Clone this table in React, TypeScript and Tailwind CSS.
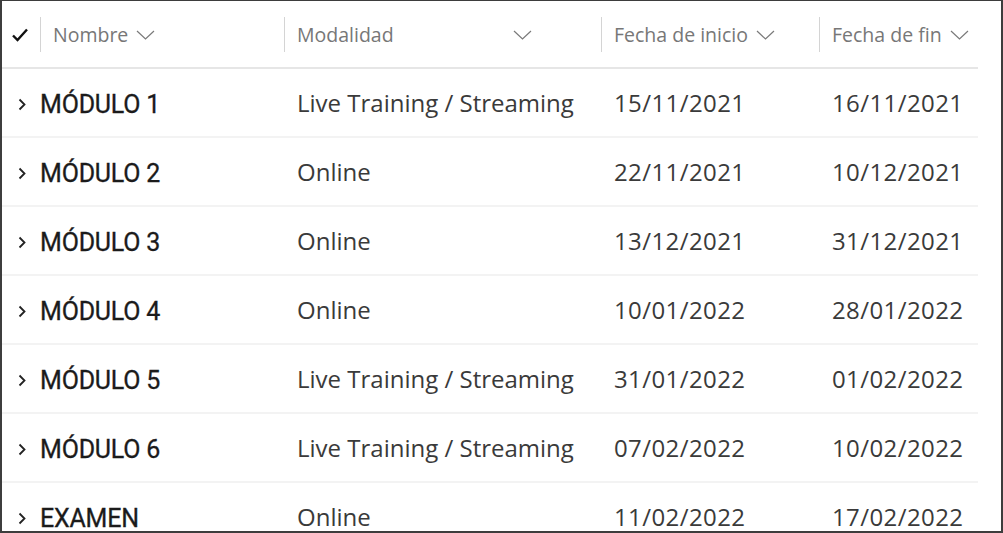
const ROWS = [
  { name: 'MÓDULO 1', mode: 'Live Training / Streaming', start: '15/11/2021', end: '16/11/2021' },
  { name: 'MÓDULO 2', mode: 'Online', start: '22/11/2021', end: '10/12/2021' },
  { name: 'MÓDULO 3', mode: 'Online', start: '13/12/2021', end: '31/12/2021' },
  { name: 'MÓDULO 4', mode: 'Online', start: '10/01/2022', end: '28/01/2022' },
  { name: 'MÓDULO 5', mode: 'Live Training / Streaming', start: '31/01/2022', end: '01/02/2022' },
  { name: 'MÓDULO 6', mode: 'Live Training / Streaming', start: '07/02/2022', end: '10/02/2022' },
  { name: 'EXAMEN', mode: 'Online', start: '11/02/2022', end: '17/02/2022' },
];

const COLS = 'grid grid-cols-[38px_244px_317px_218px_159px]';

function ChevronDown({ className = '' }: { className?: string }) {
  return (
    <svg width="19" height="10" viewBox="0 0 19 10" className={className}>
      <path d="M1 1l8.5 8 8.5-8" fill="none" stroke="#7a7a7a" strokeWidth="1.2" />
    </svg>
  );
}

function HeaderCell({ label, chevronGap = 'ml-2' }: { label: string; chevronGap?: string }) {
  return (
    <div className="flex h-full items-center">
      <div className="h-[35px] w-px bg-[#d4d4d4]" />
      <span className="ml-3 text-[19.5px] text-[#777]">{label}</span>
      <ChevronDown className={chevronGap} />
    </div>
  );
}

export default function App() {
  return (
    <div
      className="h-[533px] w-[1003px] overflow-hidden border-2 border-t border-[#3d3d3d] bg-white"
      style={{ fontFamily: '"Open Sans", "Noto Sans", sans-serif' }}
    >
      <div className="w-[976px]">
        <div className={`${COLS} h-[68px] border-b-2 border-[#e6e6e6] pt-px`}>
          <div className="flex items-center justify-end pr-[12px]">
            <svg width="16" height="14" viewBox="0 0 16 14">
              <path d="M1 7.5l4.5 4.5L15 1.5" fill="none" stroke="#111" strokeWidth="2.4" />
            </svg>
          </div>
          <HeaderCell label="Nombre" />
          <HeaderCell label="Modalidad" chevronGap="ml-[119px]" />
          <HeaderCell label="Fecha de inicio" />
          <HeaderCell label="Fecha de fin" />
        </div>
        {ROWS.map((r) => (
          <div key={r.name} className={`${COLS} h-[69px] border-b-2 border-[#f3f3f3] items-center`}>
            <div className="flex items-center justify-end pr-[13px] pt-1">
              <svg width="9" height="13" viewBox="0 0 9 13">
                <path d="M1.5 1.5l5 5-5 5" fill="none" stroke="#222" strokeWidth="1.8" />
              </svg>
            </div>
            <div
              className="pt-1 text-[25px] tracking-[-0.2px] text-[#1b1b1b] [-webkit-text-stroke:0.3px_#1b1b1b]"
              style={{ fontFamily: 'Roboto, "Liberation Sans", sans-serif' }}
            >
              {r.name}
            </div>
            <div className="pl-[13px] text-[24px] text-[#3a3a3a]">{r.mode}</div>
            <div className="pl-[13px] text-[24px] tracking-[0.4px] text-[#3a3a3a]">{r.start}</div>
            <div className="pl-[13px] text-[24px] tracking-[0.4px] text-[#3a3a3a]">{r.end}</div>
          </div>
        ))}
      </div>
    </div>
  );
}
